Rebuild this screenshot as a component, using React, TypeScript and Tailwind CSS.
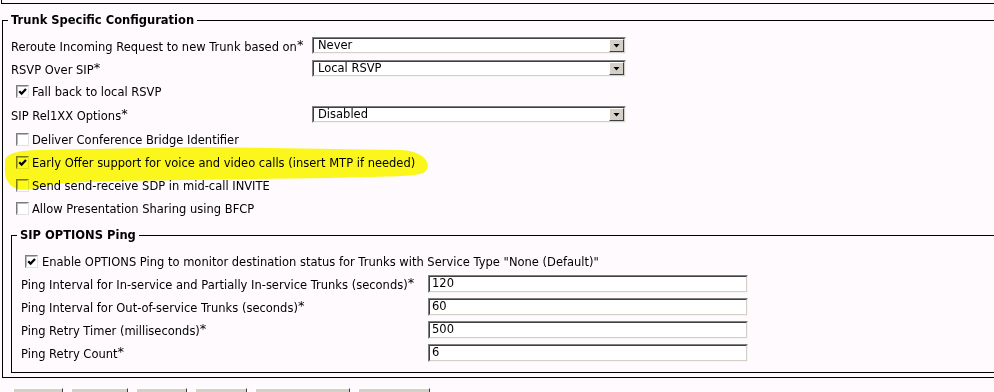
import React from 'react';

const topRows = [
  { label: 'Reroute Incoming Request to new Trunk based on', value: 'Never' },
  { label: 'RSVP Over SIP', value: 'Local RSVP' },
];

const checkRows = [
  { label: 'Deliver Conference Bridge Identifier', checked: false },
  { label: 'Early Offer support for voice and video calls (insert MTP if needed)', checked: true },
  { label: 'Send send-receive SDP in mid-call INVITE', checked: false },
  { label: 'Allow Presentation Sharing using BFCP', checked: false },
];

const pingRows = [
  { label: 'Ping Interval for In-service and Partially In-service Trunks (seconds)', value: '120' },
  { label: 'Ping Interval for Out-of-service Trunks (seconds)', value: '60' },
  { label: 'Ping Retry Timer (milliseconds)', value: '500' },
  { label: 'Ping Retry Count', value: '6' },
];

// only the top edge of these is inside the window
const buttons = [
  { label: 'Save', w: 'w-[50px]' },
  { label: 'Delete', w: 'w-[57px]' },
  { label: 'Reset', w: 'w-[51px]' },
  { label: 'Restart', w: 'w-[52px]' },
  { label: 'Apply Config', w: 'w-[95px]' },
  { label: 'Add New', w: 'w-[72px]' },
];

const Star = () => <span className="align-[2px] text-[13px] leading-none">*</span>;

const Checkbox = ({ checked }: { checked: boolean }) => (
  <span className="flex w-[13px] h-[13px] shrink-0 border border-t-[#7c7c7c] border-l-[#7c7c7c] border-r-[#e2e2e2] border-b-[#e2e2e2] bg-white">
    <span className="flex flex-1 items-center justify-center border border-t-[#b8b8b8] border-l-[#b8b8b8] border-r-white border-b-white">
      {checked && (
        <svg width="9" height="9" viewBox="0 0 9 9">
          <path d="M1.2 4.2l2.4 2.4L8 2" stroke="#000" strokeWidth="2.2" fill="none" />
        </svg>
      )}
    </span>
  </span>
);

const Select = ({ value }: { value: string }) => (
  <div className="flex w-[314px] h-[17px] border border-t-[#808080] border-l-[#808080] border-r-[#f4f4f4] border-b-[#f4f4f4]">
    <div className="flex flex-1 items-center border border-t-[#404040] border-l-[#404040] border-r-[#d4d0c8] border-b-[#d4d0c8] bg-white">
      <span className="flex-1 pl-[4px] leading-none">{value}</span>
      <span className="flex items-center justify-center w-[15px] h-full bg-[#d4d0c8] border border-t-white border-l-white border-r-[#404040] border-b-[#404040]">
        <svg width="7" height="4" viewBox="0 0 7 4">
          <path d="M0.5 0h6L3.5 3.5z" fill="#000" />
        </svg>
      </span>
    </div>
  </div>
);

const TextInput = ({ value }: { value: string }) => (
  <div className="flex w-[320px] h-[18px] border border-t-[#808080] border-l-[#808080] border-r-[#f4f4f4] border-b-[#f4f4f4]">
    <div className="flex flex-1 items-center border border-t-[#404040] border-l-[#404040] border-r-[#d4d0c8] border-b-[#d4d0c8] bg-white pl-[2px] leading-none">
      {value}
    </div>
  </div>
);

export default function App() {
  return (
    <div className="relative w-[994px] h-[392px] overflow-hidden bg-[#fefafe] text-black text-[11.5px] font-['DejaVu_Sans',Verdana,sans-serif]">
      {/* box above, cut off by the window */}
      <div className="ml-[1px] w-[1100px] h-[4px] border-l border-b border-black" />

      {/* Trunk Specific Configuration */}
      <fieldset className="ml-[2px] mt-[9px] w-[1100px] border border-black">
        <legend className="ml-[5px] px-[3px] h-[14px] leading-[14px] font-bold">
          Trunk Specific Configuration
        </legend>
        <div className="pt-[7px]">
          {topRows.map((row) => (
            <div key={row.label} className="flex items-center h-[23px]">
              <span className="w-[309px] pl-[8px] shrink-0 leading-[14px]">
                {row.label}
                <Star />
              </span>
              <Select value={row.value} />
            </div>
          ))}
          <div className="flex items-center h-[23px] pl-[13px]">
            <Checkbox checked />
            <span className="ml-[3px] leading-[14px]">Fall back to local RSVP</span>
          </div>
          <div className="flex items-center h-[23px]">
            <span className="w-[309px] pl-[8px] shrink-0 leading-[14px]">
              SIP Rel1XX Options
              <Star />
            </span>
            <Select value="Disabled" />
          </div>

          <div className="mt-[2px]">
            {checkRows.map((row) => (
              <div key={row.label} className="flex items-center h-[23px] pl-[13px]">
                <Checkbox checked={row.checked} />
                <span className="ml-[3px] leading-[14px]">{row.label}</span>
              </div>
            ))}
          </div>

          {/* SIP OPTIONS Ping */}
          <fieldset className="ml-[8px] mt-[8px] mb-[4px] w-[1100px] border border-black">
            <legend className="ml-[5px] px-[3px] h-[14px] leading-[14px] font-bold">
              SIP OPTIONS Ping
            </legend>
            <div className="pt-[9px] pb-[8px]">
              <div className="flex items-center h-[21px] pl-[13px]">
                <Checkbox checked />
                <span className="ml-[4px] leading-[14px]">
                  Enable OPTIONS Ping to monitor destination status for Trunks with Service Type "None (Default)"
                </span>
              </div>
              {pingRows.map((row) => (
                <div key={row.label} className="flex items-center h-[23px]">
                  <span className="w-[416px] pl-[9px] shrink-0 leading-[14px]">
                    {row.label}
                    <Star />
                  </span>
                  <TextInput value={row.value} />
                </div>
              ))}
            </div>
          </fieldset>
        </div>
      </fieldset>

      <div className="flex gap-2 ml-[13px] mt-[10px]">
        {buttons.map((b) => (
          <button
            key={b.label}
            aria-label={b.label}
            className={`${b.w} h-[22px] bg-[#d4d0c8] border border-t-white border-l-white border-r-[#404040] border-b-[#404040]`}
          />
        ))}
      </div>

      {/* highlighter annotation */}
      <svg
        className="absolute left-0 top-0 pointer-events-none mix-blend-multiply"
        width="994"
        height="392"
        viewBox="0 0 994 392"
      >
        <path
          d="M5 162C4 154 18 150 40 150L200 147L400 150C424 151 432 163 426 171C420 177 400 176 330 178L120 181C80 182 52 183 36 188C22 192 12 189 8 182C4 176 5 169 5 162Z"
          fill="#fcfc1c"
        />
      </svg>
    </div>
  );
}
